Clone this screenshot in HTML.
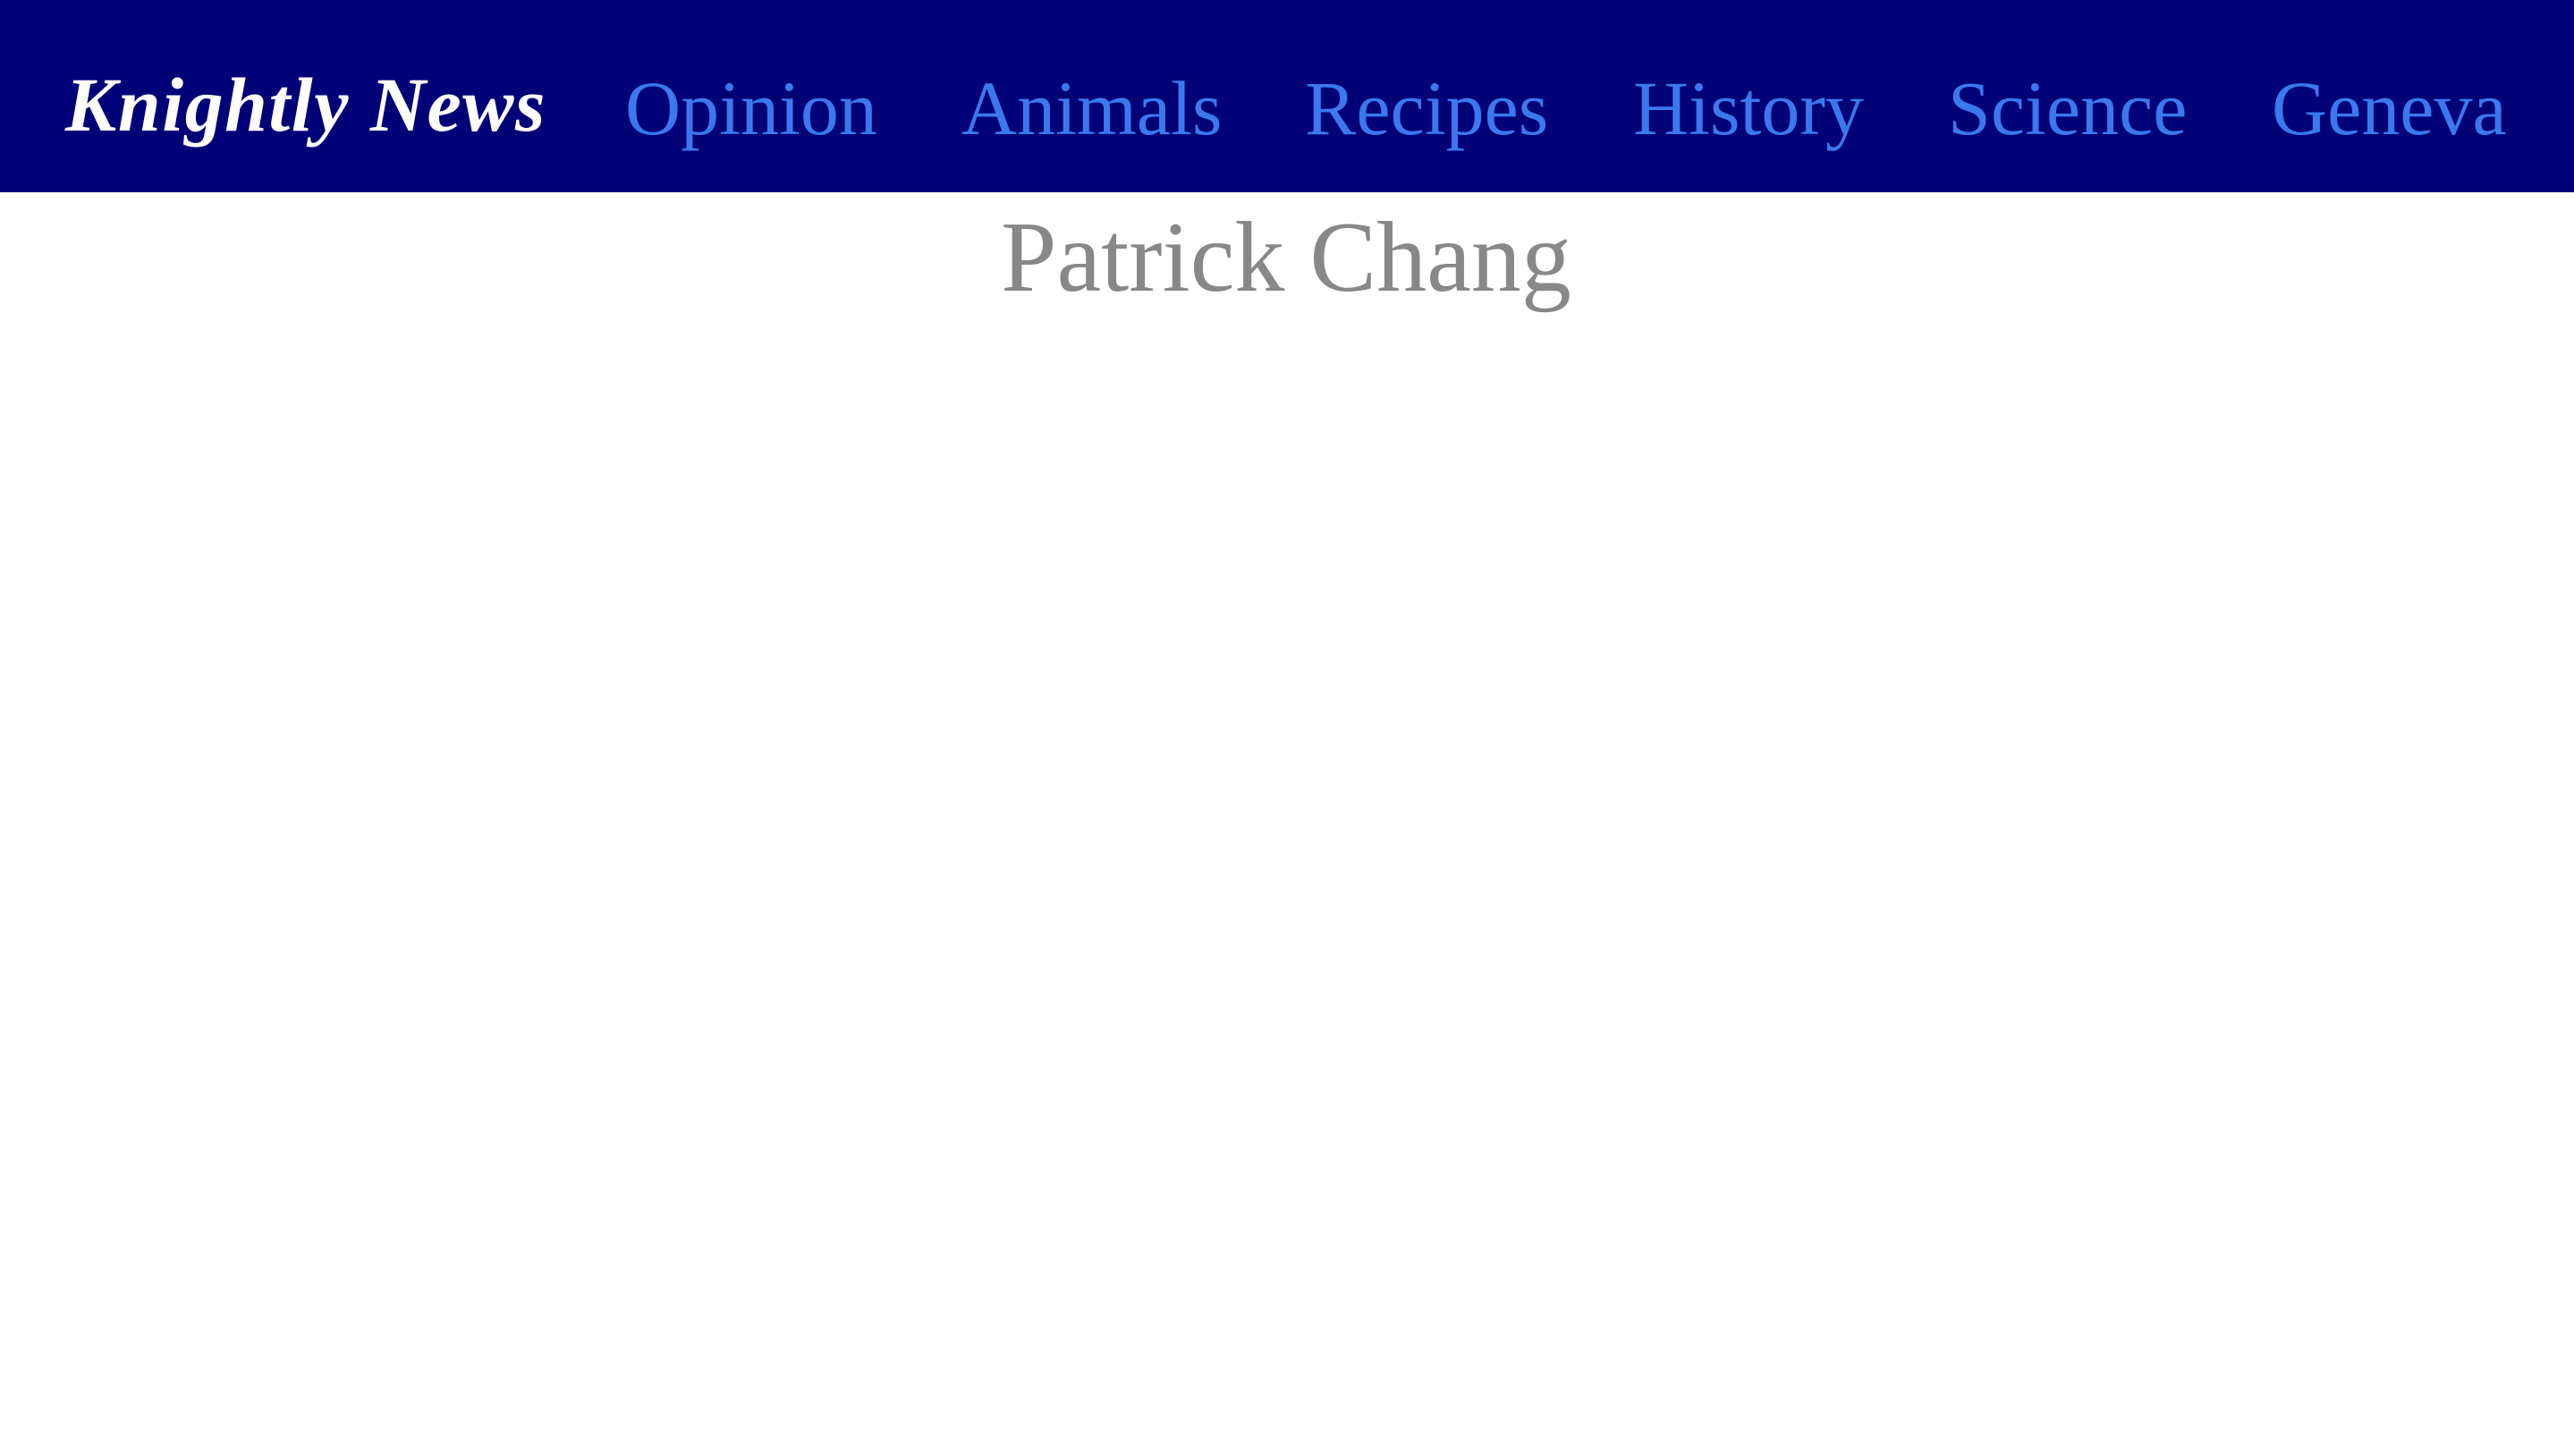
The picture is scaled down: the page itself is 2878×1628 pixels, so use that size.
<!DOCTYPE html>
<html><head><meta charset="utf-8"><style>
html,body{margin:0;padding:0;width:2878px;height:1628px;background:#fff;overflow:hidden}
.nav{position:absolute;left:0;top:0;width:2878px;height:215px;background:#000077}
.t{position:absolute;font-family:"Liberation Serif",serif;white-space:nowrap;line-height:1}
.logo{left:73px;top:74px;font-size:86px;font-weight:bold;font-style:italic;color:#fff;letter-spacing:1.5px}
.l{top:78px;font-size:86px;color:#3a78ee}
.h{top:232px;left:0;width:2876px;text-align:center;font-size:112px;color:#888}
</style></head><body>
<div class="nav"></div>
<div class="t logo">Knightly News</div>
<div class="t l" style="left:699px">Opinion</div>
<div class="t l" style="left:1075px">Animals</div>
<div class="t l" style="left:1459px">Recipes</div>
<div class="t l" style="left:1826px">History</div>
<div class="t l" style="left:2178px">Science</div>
<div class="t l" style="left:2540px">Geneva</div>
<div class="t h">Patrick Chang</div>
</body></html>
